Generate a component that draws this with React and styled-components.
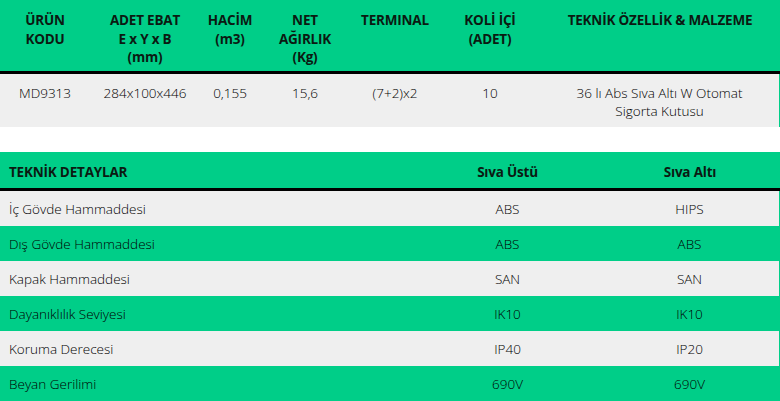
import React from "react";
import styled, { createGlobalStyle } from "styled-components";

const GREEN = "#00ce88";
const GREY = "#efefef";

const Global = createGlobalStyle`
  html, body { margin: 0; padding: 0; background: #fff; }
  body { font-family: "Open Sans", "Noto Sans", sans-serif; color: #000; }
`;

const Page = styled.div`
  width: 780px;
  display: flex;
  flex-direction: column;
`;

const topCols = "90px 110px 60px 90px 90px 100px 1fr";

const HeadRow = styled.div`
  display: grid;
  grid-template-columns: ${(p) => p.$cols};
  background: ${GREEN};
  height: ${(p) => p.$h}px;
  border-bottom: 3px solid #000;
  box-sizing: content-box;
`;

const HeadCell = styled.div`
  font-weight: 700;
  font-size: 13.5px;
  line-height: 18.5px;
  letter-spacing: -0.2px;
  color: #0b1a12;
  text-align: ${(p) => (p.$left ? "left" : "center")};
  padding: ${(p) => (p.$left ? "0 0 0 9px" : "0")};
  padding-top: ${(p) => p.$pt}px;
  display: flex;
  flex-direction: column;
  align-items: ${(p) => (p.$left ? "flex-start" : "center")};
`;

const DataRow = styled.div`
  display: grid;
  grid-template-columns: ${(p) => p.$cols};
  background: ${(p) => (p.$alt ? GREEN : GREY)};
  height: ${(p) => p.$h}px;
  border-right: 1px solid ${GREEN};
  align-items: ${(p) => (p.$top ? "start" : "center")};
`;

const DataCell = styled.div`
  font-size: 13.5px;
  line-height: 18px;
  font-weight: 300;
  color: #000;
  text-align: ${(p) => (p.$left ? "left" : "center")};
  padding-left: ${(p) => (p.$left ? "9px" : "0")};
  padding-top: ${(p) => (p.$top ? "10px" : "0")};
`;

const Gap = styled.div`
  height: 25px;
`;

const botCols = "415px 185px 1fr";

const topHeads = [
  ["ÜRÜN", "KODU"],
  ["ADET EBAT", "E x Y x B", "(mm)"],
  ["HACİM", "(m3)"],
  ["NET", "AĞIRLIK", "(Kg)"],
  ["TERMINAL"],
  ["KOLİ İÇİ", "(ADET)"],
  ["TEKNİK ÖZELLİK & MALZEME"],
];

const topData = [
  ["MD9313"],
  ["284x100x446"],
  ["0,155"],
  ["15,6"],
  ["(7+2)x2"],
  ["10"],
  ["36 lı Abs Sıva Altı W Otomat", "Sigorta Kutusu"],
];

const details = [
  ["İç Gövde Hammaddesi", "ABS", "HIPS"],
  ["Dış Gövde Hammaddesi", "ABS", "ABS"],
  ["Kapak Hammaddesi", "SAN", "SAN"],
  ["Dayanıklılık Seviyesi", "IK10", "IK10"],
  ["Koruma Derecesi", "IP40", "IP20"],
  ["Beyan Gerilimi", "690V", "690V"],
];

export default function App() {
  return (
    <Page>
      <Global />
      <HeadRow $cols={topCols} $h={71}>
        {topHeads.map((lines, i) => (
          <HeadCell key={i} $pt={11}>
            {lines.map((l) => (
              <span key={l}>{l}</span>
            ))}
          </HeadCell>
        ))}
      </HeadRow>
      <DataRow $cols={topCols} $h={53} $top>
        {topData.map((lines, i) => (
          <DataCell key={i} $top>
            {lines.map((l) => (
              <div key={l}>{l}</div>
            ))}
          </DataCell>
        ))}
      </DataRow>
      <Gap />
      <HeadRow $cols={botCols} $h={36}>
        <HeadCell $left $pt={11}>TEKNİK DETAYLAR</HeadCell>
        <HeadCell $pt={11}>Sıva Üstü</HeadCell>
        <HeadCell $pt={11}>Sıva Altı</HeadCell>
      </HeadRow>
      {details.map((r, i) => (
        <DataRow key={r[0]} $cols={botCols} $h={35} $alt={i % 2 === 1}>
          <DataCell $left>{r[0]}</DataCell>
          <DataCell>{r[1]}</DataCell>
          <DataCell>{r[2]}</DataCell>
        </DataRow>
      ))}
    </Page>
  );
}
